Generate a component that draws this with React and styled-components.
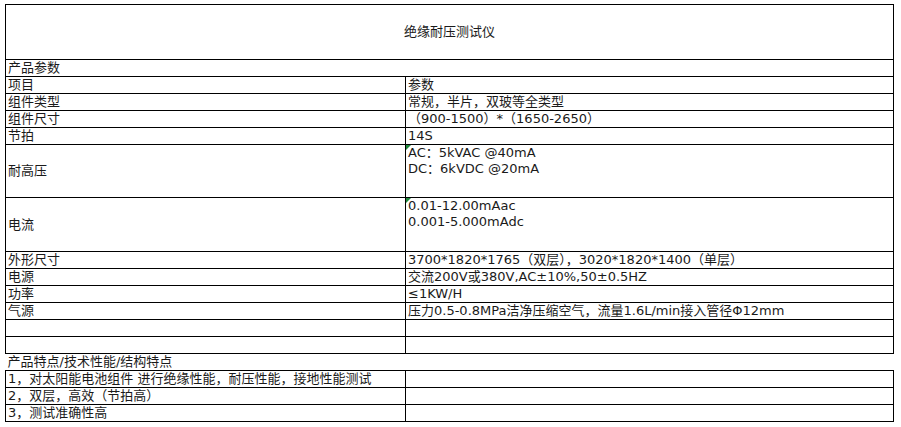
import React from 'react';
import styled, { createGlobalStyle } from 'styled-components';

const GlobalStyle = createGlobalStyle`
    body {
        margin: 0;
        padding: 4px 0 0 5px;
        background: #fff;
        font-family: "DejaVu Sans", "Noto Sans CJK SC", sans-serif;
        font-size: 13px;
        color: #1a1a1a;
    }
`

const Sheet = styled.table`
    border-collapse: collapse;
    table-layout: fixed;
    width: 888px;
`

const Cell = styled.td`
    position: relative;
    border: ${props => props.$bare ? 'none' : '1px solid #000'};
    padding: 0 2px;
    height: ${props => props.$h || 16}px;
    line-height: 16px;
    vertical-align: ${props => props.$top ? 'top' : 'middle'};
    text-align: ${props => props.$center ? 'center' : 'left'};
    white-space: nowrap;
    overflow: hidden;

    /* excel style green marker */
    &::before {
        content: '';
        display: ${props => props.$flag ? 'block' : 'none'};
        position: absolute;
        top: 0;
        left: 0;
        border-top: 5px solid #1e8a3c;
        border-right: 5px solid transparent;
    }
`

const Line = styled.div`
    line-height: 16px;
`

const params = [
    ['组件类型', '常规，半片，双玻等全类型'],
    ['组件尺寸', '（900-1500）*（1650-2650）'],
    ['节拍', '14S'],
]

const params2 = [
    ['外形尺寸', '3700*1820*1765（双层），3020*1820*1400（单层）'],
    ['电源', '交流200V或380V,AC±10%,50±0.5HZ'],
    ['功率', '≤1KW/H'],
    ['气源', '压力0.5-0.8MPa洁净压缩空气，流量1.6L/min接入管径Φ12mm'],
    ['', ''],
    ['', ''],
]

const features = [
    '1，对太阳能电池组件 进行绝缘性能，耐压性能，接地性能测试',
    '2，双层，高效（节拍高）',
    '3，测试准确性高',
]

const App = () => {
    return <>
        <GlobalStyle />
        <Sheet>
            <colgroup>
                <col style={{ width: 400 }} />
                <col style={{ width: 488 }} />
            </colgroup>
            <tbody>
                {/* Title */}
                <tr>
                    <Cell colSpan={2} $h={54} $center>绝缘耐压测试仪</Cell>
                </tr>
                <tr>
                    <Cell colSpan={2}>产品参数</Cell>
                </tr>
                <tr>
                    <Cell>项目</Cell>
                    <Cell>参数</Cell>
                </tr>
                {params.map(([k, v]) => (
                    <tr key={k}>
                        <Cell>{k}</Cell>
                        <Cell>{v}</Cell>
                    </tr>
                ))}
                <tr>
                    <Cell $h={52}>耐高压</Cell>
                    <Cell $h={52} $top $flag>
                        <Line>AC：5kVAC @40mA</Line>
                        <Line>DC：6kVDC @20mA</Line>
                    </Cell>
                </tr>
                <tr>
                    <Cell $h={53}>电流</Cell>
                    <Cell $h={53} $top $flag>
                        <Line>0.01-12.00mAac</Line>
                        <Line>0.001-5.000mAdc</Line>
                    </Cell>
                </tr>
                {params2.map(([k, v], i) => (
                    <tr key={i}>
                        <Cell>{k}</Cell>
                        <Cell>{v}</Cell>
                    </tr>
                ))}
                {/* features */}
                <tr>
                    <Cell colSpan={2} $bare>产品特点/技术性能/结构特点</Cell>
                </tr>
                {features.map(f => (
                    <tr key={f}>
                        <Cell>{f}</Cell>
                        <Cell></Cell>
                    </tr>
                ))}
            </tbody>
        </Sheet>
    </>
};

export default App;
